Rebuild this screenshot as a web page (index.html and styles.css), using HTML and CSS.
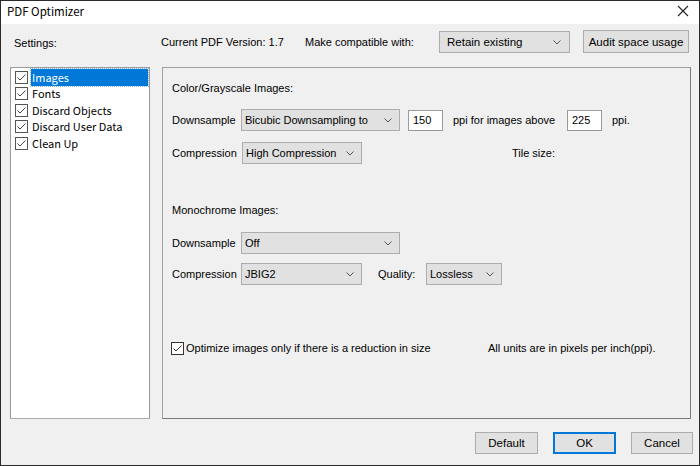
FILE: index.html
```html
<!DOCTYPE html>
<html>
<head>
<meta charset="utf-8">
<link rel="stylesheet" href="styles.css">
</head>
<body>
<div class="window">
  <div class="titlebar">
    <span class="title">PDF Optimizer</span>
    <svg class="close" width="12" height="12" viewBox="0 0 12 12"><path d="M1 1 L11 11 M11 1 L1 11" stroke="#222" stroke-width="1.1" fill="none"/></svg>
  </div>

  <div class="topbar">
    <span class="t-settings">Settings:</span>
    <span class="t-version">Current PDF Version: 1.7</span>
    <span class="t-compat">Make compatible with:</span>
    <div class="select top-select"><span>Retain existing</span><svg class="chev" width="8" height="5" viewBox="0 0 8 5"><path d="M0.5 0.5 L4 4 L7.5 0.5" stroke="#555" fill="none"/></svg></div>
    <button class="btn audit">Audit space usage</button>
  </div>

  <div class="main">
    <div class="list">
      <div class="item"><svg class="cb" width="13" height="13" viewBox="0 0 13 13"><rect x="0.5" y="0.5" width="12" height="12" fill="#fff" stroke="#555"/><path d="M2.5 6.5 L5 9 L10.5 3.5" stroke="#444" stroke-width="1" fill="none"/></svg><span class="lbl sel">Images</span></div>
      <div class="item"><svg class="cb" width="13" height="13" viewBox="0 0 13 13"><rect x="0.5" y="0.5" width="12" height="12" fill="#fff" stroke="#555"/><path d="M2.5 6.5 L5 9 L10.5 3.5" stroke="#444" stroke-width="1" fill="none"/></svg><span class="lbl">Fonts</span></div>
      <div class="item"><svg class="cb" width="13" height="13" viewBox="0 0 13 13"><rect x="0.5" y="0.5" width="12" height="12" fill="#fff" stroke="#555"/><path d="M2.5 6.5 L5 9 L10.5 3.5" stroke="#444" stroke-width="1" fill="none"/></svg><span class="lbl">Discard Objects</span></div>
      <div class="item"><svg class="cb" width="13" height="13" viewBox="0 0 13 13"><rect x="0.5" y="0.5" width="12" height="12" fill="#fff" stroke="#555"/><path d="M2.5 6.5 L5 9 L10.5 3.5" stroke="#444" stroke-width="1" fill="none"/></svg><span class="lbl">Discard User Data</span></div>
      <div class="item"><svg class="cb" width="13" height="13" viewBox="0 0 13 13"><rect x="0.5" y="0.5" width="12" height="12" fill="#fff" stroke="#555"/><path d="M2.5 6.5 L5 9 L10.5 3.5" stroke="#444" stroke-width="1" fill="none"/></svg><span class="lbl">Clean Up</span></div>
    </div>

    <div class="panel">
      <div class="heading h1">Color/Grayscale Images:</div>
      <div class="row r1">
        <span class="label">Downsample</span>
        <div class="select w159"><span>Bicubic Downsampling to</span><svg class="chev" width="8" height="5" viewBox="0 0 8 5"><path d="M0.5 0.5 L4 4 L7.5 0.5" stroke="#555" fill="none"/></svg></div>
        <div class="input in1">150</div>
        <span class="ppi-text">ppi for images above</span>
        <div class="input">225</div>
        <span class="ppi-end">ppi.</span>
      </div>
      <div class="row r2">
        <span class="label lc">Compression</span>
        <div class="select w120"><span>High Compression</span><svg class="chev" width="8" height="5" viewBox="0 0 8 5"><path d="M0.5 0.5 L4 4 L7.5 0.5" stroke="#555" fill="none"/></svg></div>
        <span class="tile">Tile size:</span>
      </div>

      <div class="heading h2">Monochrome Images:</div>
      <div class="row r3">
        <span class="label">Downsample</span>
        <div class="select w159"><span>Off</span><svg class="chev" width="8" height="5" viewBox="0 0 8 5"><path d="M0.5 0.5 L4 4 L7.5 0.5" stroke="#555" fill="none"/></svg></div>
      </div>
      <div class="row r4">
        <span class="label">Compression</span>
        <div class="select w121"><span>JBIG2</span><svg class="chev" width="8" height="5" viewBox="0 0 8 5"><path d="M0.5 0.5 L4 4 L7.5 0.5" stroke="#555" fill="none"/></svg></div>
        <span class="quality">Quality:</span>
        <div class="select w76"><span>Lossless</span><svg class="chev" width="8" height="5" viewBox="0 0 8 5"><path d="M0.5 0.5 L4 4 L7.5 0.5" stroke="#555" fill="none"/></svg></div>
      </div>

      <div class="row r5">
        <svg class="cb2" width="13" height="13" viewBox="0 0 13 13"><rect x="0.5" y="0.5" width="12" height="12" fill="#fff" stroke="#333"/><path d="M2.5 6.5 L5 9 L10.5 3.5" stroke="#333" stroke-width="1" fill="none"/></svg>
        <span class="opt">Optimize images only if there is a reduction in size</span>
        <span class="units">All units are in pixels per inch(ppi).</span>
      </div>
    </div>
  </div>

  <div class="footer">
    <button class="btn fbtn">Default</button>
    <button class="btn fbtn ok">OK</button>
    <button class="btn fbtn cancel">Cancel</button>
  </div>
</div>
</body>
</html>
```

FILE: styles.css
```css
html, body {
  margin: 0;
  padding: 0;
}
body {
  width: 700px;
  height: 466px;
  overflow: hidden;
  font-family: "Liberation Sans", Arial, sans-serif;
  font-size: 11px;
  color: #000;
}
.window {
  width: 700px;
  height: 466px;
  box-sizing: border-box;
  border: 1px solid #2a2a2a;
  background: #f0f0f0;
  display: flex;
  flex-direction: column;
}
.titlebar {
  height: 23px;
  flex: none;
  background: #fff;
  display: flex;
  align-items: center;
  justify-content: space-between;
  padding: 0 10px 0 6px;
}
.title {
  font-family: "Noto Sans CJK SC", "Noto Sans", sans-serif;
  font-size: 11.5px;
  margin-top: -3px;
}
.close {
  margin-top: -4px;
}
.topbar {
  margin-top: 7px;
  height: 22px;
  flex: none;
  display: flex;
  align-items: center;
  padding-left: 13px;
}
.t-settings {
  width: 147px;
  padding-top: 2px;
}
.t-version {
  width: 144px;
}
.t-compat {
  width: 134px;
}
.select {
  height: 22px;
  box-sizing: border-box;
  border: 1px solid #adadad;
  background: #e1e1e1;
  display: flex;
  align-items: center;
  justify-content: space-between;
  padding: 0 7px 0 3px;
  flex: none;
}
.top-select {
  width: 131px;
  padding-left: 7px;
  padding-right: 8px;
  font-size: 11.5px;
}
.btn {
  font-family: "Liberation Sans", Arial, sans-serif;
  font-size: 11.5px;
  color: #000;
  background: #e1e1e1;
  border: 1px solid #adadad;
  height: 22px;
  box-sizing: border-box;
  padding: 0;
  margin: 0;
  flex: none;
}
.audit {
  width: 106px;
  margin-left: 13px;
  height: 23px;
  margin-top: -1px;
}
.main {
  margin-top: 14px;
  display: flex;
  padding-left: 9px;
  gap: 12px;
  height: 352px;
  flex: none;
}
.list {
  width: 140px;
  height: 352px;
  box-sizing: border-box;
  background: #fff;
  border: 1px solid #9a9aa2;
  border-bottom-color: #a8a8b0;
  padding: 1px 1px 0 4px;
  font-family: "Noto Sans CJK SC", "Noto Sans", sans-serif;
  font-size: 11px;
}
.item {
  height: 16.5px;
  display: flex;
  align-items: center;
}
.cb {
  flex: none;
}
.lbl {
  margin-left: 3px;
  padding: 0 1px;
  line-height: 16px;
  height: 17px;
  flex: 1;
}
.lbl.sel {
  background: #0078d7;
  color: #fff;
  outline: 1px dotted #7fb4e6;
}
.panel {
  width: 529px;
  height: 352px;
  box-sizing: border-box;
  border: 1px solid #a0a0a0;
  border-right-color: #7a7a7a;
  border-bottom-color: #7a7a7a;
  padding-left: 9px;
  display: flex;
  flex-direction: column;
}
.heading {
  height: 16px;
  line-height: 16px;
  flex: none;
}
.h1 { margin-top: 12px; }
.h2 { margin-top: 38px; }
.row {
  display: flex;
  align-items: center;
  height: 22px;
  flex: none;
}
.r1 { margin-top: 13px; }
.r2 { margin-top: 11px; }
.r3 { margin-top: 14px; }
.r4 { margin-top: 9px; }
.r5 { margin-top: 55px; height: 16px; }
.label {
  width: 69px;
  flex: none;
}
.label.lc { width: 70px; }
.w159 { width: 159px; }
.w120 { width: 120px; }
.w121 { width: 121px; }
.w76 { width: 76px; }
.input {
  width: 35px;
  height: 21px;
  box-sizing: border-box;
  background: #fff;
  border: 1px solid #9a9a9a;
  padding-left: 4px;
  display: flex;
  align-items: center;
  flex: none;
}
.in1 { margin-left: 8px; }
.ppi-text {
  margin-left: 10px;
  width: 114px;
}
.ppi-end {
  margin-left: 10px;
}
.tile {
  margin-left: 150px;
}
.quality {
  margin-left: 16px;
  width: 48px;
}
.cb2 {
  margin-left: -1px;
  flex: none;
}
.opt {
  margin-left: 2px;
  width: 302px;
}
.units {
  margin-left: 0;
}
.footer {
  margin-top: 13px;
  display: flex;
  justify-content: flex-end;
  padding-right: 6px;
  gap: 15px;
}
.fbtn {
  width: 63px;
  height: 22px;
}
.ok {
  border: 1px solid #0078d7;
  box-shadow: inset 0 0 0 1px #0078d7;
}
.cancel {
  width: 62px;
}
```
